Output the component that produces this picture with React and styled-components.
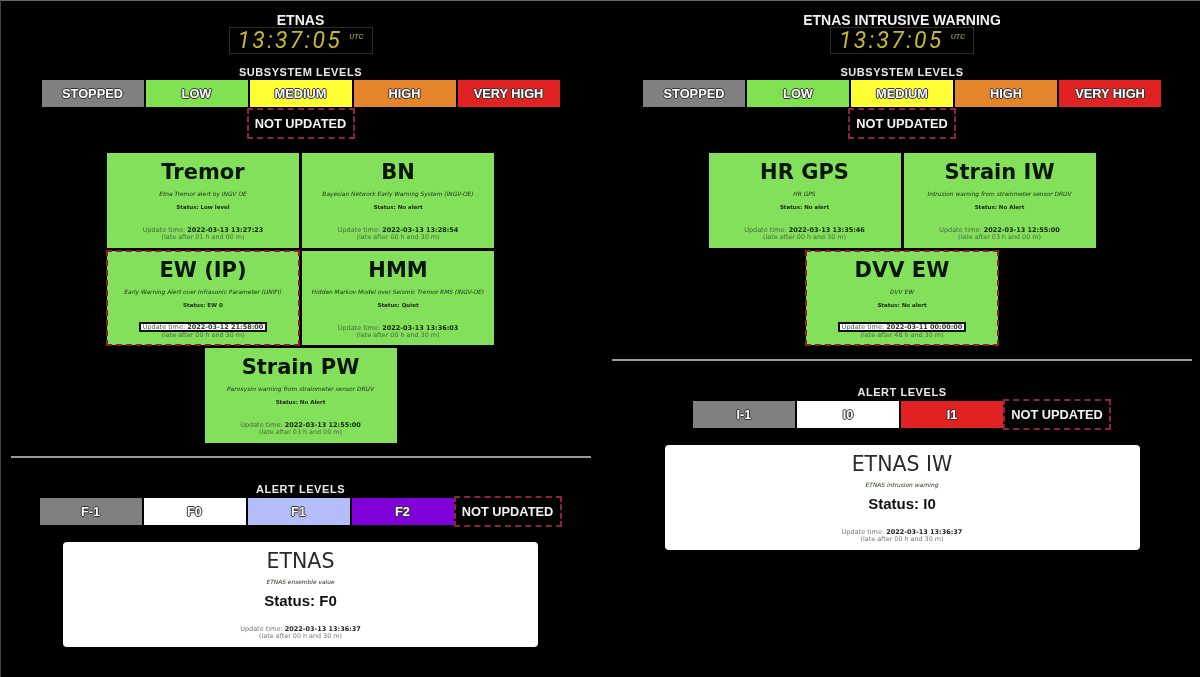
import styled, { createGlobalStyle } from "styled-components";

const GlobalStyle = createGlobalStyle`
  html, body {
    margin: 0;
    padding: 0;
    background: #000;
  }
`;

const SUBSYSTEM_LEVELS = [
  { label: "STOPPED", color: "#808080" },
  { label: "LOW", color: "#7fe050" },
  { label: "MEDIUM", color: "#ffff33" },
  { label: "HIGH", color: "#e5852b" },
  { label: "VERY HIGH", color: "#e02222" },
];

const VOLCANO_CARDS = [
  {
    name: "Tremor",
    desc: "Etna Tremor alert by INGV OE",
    status: "Low level",
    time: "2022-03-13 13:27:23",
    late: "late after 01 h and 00 m",
  },
  {
    name: "BN",
    desc: "Bayesian Network Early Warning System (INGV-OE)",
    status: "No alert",
    time: "2022-03-13 13:28:54",
    late: "late after 00 h and 30 m",
  },
  {
    name: "EW (IP)",
    desc: "Early Warning Alert over Infrasonic Parameter (UNIFI)",
    status: "EW 0",
    time: "2022-03-12 21:58:00",
    late: "late after 00 h and 30 m",
    stale: true,
  },
  {
    name: "HMM",
    desc: "Hidden Markov Model over Seismic Tremor RMS (INGV-OE)",
    status: "Quiet",
    time: "2022-03-13 13:36:03",
    late: "late after 00 h and 30 m",
  },
  {
    name: "Strain PW",
    desc: "Paroxysm warning from strainmeter sensor DRUV",
    status: "No Alert",
    time: "2022-03-13 12:55:00",
    late: "late after 03 h and 00 m",
  },
];

const INTRUSIVE_CARDS = [
  {
    name: "HR GPS",
    desc: "HR GPS",
    status: "No alert",
    time: "2022-03-13 13:35:46",
    late: "late after 00 h and 30 m",
  },
  {
    name: "Strain IW",
    desc: "Intrusion warning from strainmeter sensor DRUV",
    status: "No Alert",
    time: "2022-03-13 12:55:00",
    late: "late after 03 h and 00 m",
  },
  {
    name: "DVV EW",
    desc: "DVV EW",
    status: "No alert",
    time: "2022-03-11 00:00:00",
    late: "late after 48 h and 30 m",
    stale: true,
  },
];

export default function App() {
  return (
    <Page>
      <GlobalStyle />
      <Panel
        title="ETNAS"
        cards={VOLCANO_CARDS}
        alertLevels={[
          { label: "F-1", color: "#808080" },
          { label: "F0", color: "#ffffff" },
          { label: "F1", color: "#b3bdfa" },
          { label: "F2", color: "#7f00d8" },
        ]}
        summary={{
          name: "ETNAS",
          desc: "ETNAS ensemble value",
          status: "F0",
          time: "2022-03-13 13:36:37",
          late: "late after 00 h and 30 m",
        }}
      />
      <Panel
        title="ETNAS INTRUSIVE WARNING"
        cards={INTRUSIVE_CARDS}
        alertLevels={[
          { label: "I-1", color: "#808080" },
          { label: "I0", color: "#ffffff" },
          { label: "I1", color: "#e02222" },
        ]}
        summary={{
          name: "ETNAS IW",
          desc: "ETNAS intrusion warning",
          status: "I0",
          time: "2022-03-13 13:36:37",
          late: "late after 00 h and 30 m",
        }}
      />
    </Page>
  );
}

function Panel({ title, cards, alertLevels, summary }) {
  return (
    <Column>
      <Title>{title}</Title>
      <Clock>
        <ClockDigits>13:37:05</ClockDigits>
        <ClockZone>UTC</ClockZone>
      </Clock>
      <SectionLabel $top={11} $bottom={1}>
        SUBSYSTEM LEVELS
      </SectionLabel>
      <LevelBar>
        {SUBSYSTEM_LEVELS.map((level) => (
          <Level key={level.label} $color={level.color}>
            {level.label}
          </Level>
        ))}
      </LevelBar>
      <NotUpdated>NOT UPDATED</NotUpdated>
      <Cards>
        {cards.map((card) => (
          <Card key={card.name} $stale={card.stale}>
            <CardName>{card.name}</CardName>
            <CardDesc>{card.desc}</CardDesc>
            <CardStatus>Status: {card.status}</CardStatus>
            <UpdateTime $stale={card.stale}>
              Update time: <b>{card.time}</b>
            </UpdateTime>
            <LateNote>({card.late})</LateNote>
          </Card>
        ))}
      </Cards>
      <Divider />
      <SectionLabel $top={24} $bottom={2}>
        ALERT LEVELS
      </SectionLabel>
      <LevelBar>
        {alertLevels.map((level) => (
          <Level key={level.label} $color={level.color}>
            {level.label}
          </Level>
        ))}
        <NotUpdated $inline>NOT UPDATED</NotUpdated>
      </LevelBar>
      <Summary>
        <SummaryName>{summary.name}</SummaryName>
        <SummaryDesc>{summary.desc}</SummaryDesc>
        <SummaryStatus>Status: {summary.status}</SummaryStatus>
        <UpdateTime>
          Update time: <b>{summary.time}</b>
        </UpdateTime>
        <LateNote>({summary.late})</LateNote>
      </Summary>
    </Column>
  );
}

const Page = styled.div`
  display: grid;
  grid-template-columns: 599px 604px;
  width: 1200px;
  height: 677px;
  box-sizing: border-box;
  overflow: hidden;
  background: #000;
  border-top: 1px solid #666;
  border-left: 1px solid #444;
  filter: blur(0.35px);
`;
const Column = styled.section`
  display: flex;
  flex-direction: column;
  align-items: center;
  padding-top: 13px;
  font-family: "DejaVu Sans", sans-serif;
  color: #fff;
`;
const Title = styled.h1`
  margin: 0;
  height: 13px;
  font-family: "Liberation Sans", sans-serif;
  font-size: 14px;
  line-height: 13px;
  font-weight: 700;
  color: #f2f2f2;
  white-space: nowrap;
`;
const Clock = styled.div`
  display: flex;
  align-items: center;
  justify-content: center;
  gap: 7px;
  box-sizing: border-box;
  width: 144px;
  height: 27px;
  border: 1px solid #2e2e20;
`;
const ClockDigits = styled.span`
  font-family: "Roboto", sans-serif;
  font-style: italic;
  font-weight: 400;
  font-size: 23px;
  line-height: 25px;
  letter-spacing: 2.3px;
  color: #c6b92c;
`;
const ClockZone = styled.span`
  margin-top: -8px;
  font-family: "Liberation Sans", sans-serif;
  font-style: italic;
  font-weight: 700;
  font-size: 7px;
  color: #8f8a45;
`;
const SectionLabel = styled.h2`
  margin: ${(p) => p.$top}px 0 ${(p) => p.$bottom}px;
  height: 14px;
  font-family: "Liberation Sans", sans-serif;
  font-size: 11px;
  line-height: 14px;
  font-weight: 700;
  letter-spacing: 0.55px;
  color: #e8e8e8;
`;
const LevelBar = styled.div`
  display: flex;
  align-items: center;
  justify-content: center;
  gap: 2px;
  height: 27px;
`;
const Level = styled.div`
  display: flex;
  align-items: center;
  justify-content: center;
  width: 102px;
  height: 27px;
  background: ${(p) => p.$color};
  font-family: "Liberation Sans", sans-serif;
  font-size: 12.8px;
  font-weight: 700;
  color: #fff;
  text-shadow: -1px 0 0 #333, 1px 0 0 #333, 0 -1px 0 #333, 0 1px 0 #333;
`;
const NotUpdated = styled.div`
  display: flex;
  align-items: center;
  justify-content: center;
  box-sizing: border-box;
  width: 108px;
  height: 31px;
  margin-top: ${(p) => (p.$inline ? "0" : "1px")};
  margin-left: ${(p) => (p.$inline ? "-2px" : "0")};
  border: 2px dashed #8c2440;
  font-family: "Liberation Sans", sans-serif;
  font-size: 12.8px;
  font-weight: 700;
  color: #f2f2f2;
`;
const Cards = styled.div`
  display: flex;
  flex-wrap: wrap;
  justify-content: center;
  gap: 3px;
  width: 390px;
  margin-top: 14px;
`;
const Card = styled.article`
  display: flex;
  flex-direction: column;
  align-items: center;
  box-sizing: border-box;
  width: 192px;
  height: 94.5px;
  padding-top: 7px;
  background: #82e05a;
  color: #0c1a08;
  outline: ${(p) => (p.$stale ? "2px dashed #8c1f24" : "none")};
  outline-offset: -1px;
`;
const CardName = styled.h3`
  margin: 0;
  height: 25px;
  font-size: 21px;
  line-height: 25px;
  font-weight: 700;
  color: #0a150a;
`;
const CardDesc = styled.p`
  margin: 5px 0 0;
  height: 8px;
  font-size: 5.9px;
  line-height: 8px;
  font-style: italic;
  color: #24331c;
  white-space: nowrap;
`;
const CardStatus = styled.p`
  margin: 5px 0 15px;
  height: 8px;
  font-size: 5.5px;
  line-height: 8px;
  font-weight: 700;
  color: #1a2a12;
`;
const UpdateTime = styled.p`
  margin: ${(p) => (p.$stale ? "-2px" : "0")} 0 0;
  height: ${(p) => (p.$stale ? "10px" : "8px")};
  box-sizing: border-box;
  padding: 0 2px;
  font-size: 6.5px;
  line-height: ${(p) => (p.$stale ? "6.5px" : "8px")};
  color: ${(p) => (p.$stale ? "#555" : "#4f6a47")};
  background: ${(p) => (p.$stale ? "#fff" : "transparent")};
  border: ${(p) => (p.$stale ? "2px solid #111" : "none")};
  white-space: nowrap;
  b {
    color: ${(p) => (p.$stale ? "#333" : "#16240f")};
  }
`;
const LateNote = styled.p`
  margin: 0;
  height: 7px;
  font-size: 6.4px;
  line-height: 7px;
  color: #4f6a47;
  white-space: nowrap;
`;
const Divider = styled.hr`
  width: 580px;
  height: 2px;
  margin: 13.5px 0 0;
  border: 0;
  background: #999;
`;
const Summary = styled.article`
  display: flex;
  flex-direction: column;
  align-items: center;
  box-sizing: border-box;
  width: 475px;
  height: 105px;
  margin-top: 17px;
  padding-top: 7px;
  border-radius: 4px;
  background: #fff;
  color: #222;
  ${UpdateTime} {
    margin-top: 15px;
    color: #777;
  }
  ${UpdateTime} b {
    color: #222;
  }
  ${LateNote} {
    color: #777;
  }
`;
const SummaryName = styled.h3`
  margin: 0;
  height: 25px;
  font-size: 20.5px;
  line-height: 25px;
  font-weight: 400;
  color: #2a2a2a;
`;
const SummaryDesc = styled(CardDesc)`
  margin-top: 4px;
`;
const SummaryStatus = styled.p`
  margin: 6px 0 0;
  height: 18px;
  font-family: "Liberation Sans", sans-serif;
  font-size: 15px;
  line-height: 18px;
  font-weight: 700;
  color: #111;
`;
